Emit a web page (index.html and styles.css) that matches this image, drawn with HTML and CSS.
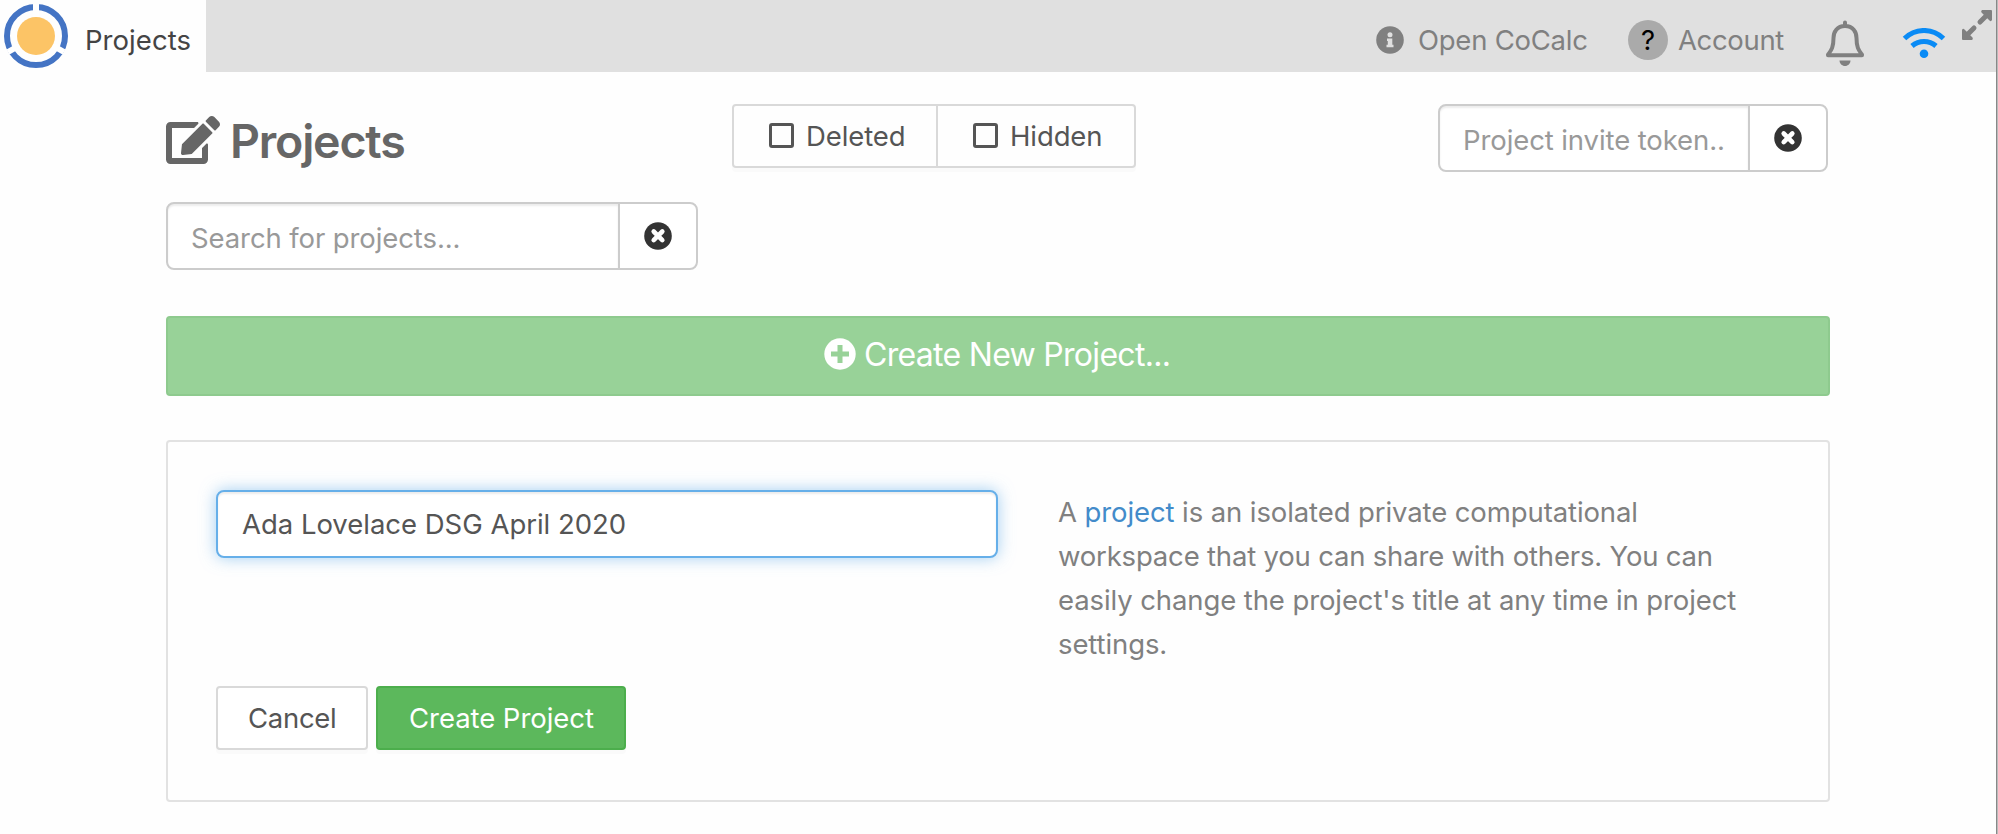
FILE: index.html
```html
<!DOCTYPE html>
<html lang="en">
<head>
<meta charset="utf-8">
<title>Projects</title>
<link rel="stylesheet" href="styles.css">
</head>
<body>
<svg width="0" height="0" class="defs">
  <symbol id="times-circle" viewBox="0 0 28 28">
    <circle cx="14" cy="14" r="13.8" fill="#333"/>
    <path d="M9.7 9.5l8.6 8.6M18.3 9.5l-8.6 8.6" stroke="#fff" stroke-width="4.6" stroke-linecap="round"/>
  </symbol>
</svg>
<div class="app">
  <header class="topbar">
    <div class="tab">
      <svg class="logo" viewBox="0 0 64 64" width="64" height="64">
        <circle cx="32" cy="32" r="29" fill="none" stroke="#4474c4" stroke-width="6"/>
        <path d="M32 36V0M32 32L4 48M32 32L60 48" stroke="#fff" stroke-width="6" fill="none"/>
        <circle cx="32" cy="32" r="19" fill="#fcc466"/>
      </svg>
      <span class="tab-label t-tab">Projects</span>
    </div>
    <nav class="nav">
      <svg class="info" viewBox="0 0 28 28" width="28" height="28"><circle cx="14" cy="14" r="13.8" fill="#808080"/><circle cx="14" cy="8.800" r="2.500" fill="#e0e0e0"/><path d="M11 12.400h5.300v6.400h1.200v2.500h-7v-2.500h1.300v-3.900H11z" fill="#e0e0e0"/></svg>
      <span class="t-open">Open CoCalc</span>
      <span class="help">?</span>
      <span class="t-account">Account</span>
      <svg class="bell" viewBox="0 0 38 46" width="38" height="46"><path d="M19 2.500V6M19 6C11 6 7.500 12 7.500 18c0 10-2.500 12.500-5.500 16.700V35.300H36v-.6C33 30.500 30.500 28 30.500 18 30.500 12 27 6 19 6z" fill="none" stroke="#808080" stroke-width="4" stroke-linejoin="round" stroke-linecap="round"/><path d="M13.500 40.500h11c0 3-2.500 5.500-5.500 5.500s-5.500-2.500-5.500-5.500z" fill="#808080"/></svg>
      <svg class="wifi" viewBox="0 0 44 30" width="44" height="30"><path d="M2.500 10.500C13.500-.2 30.500-.2 41.500 10.500M10 18c7-6 17-6 24 0" fill="none" stroke="#0a8bf5" stroke-width="5"/><circle cx="22" cy="25.700" r="4.300" fill="#0a8bf5"/></svg>
      <svg class="expand" viewBox="0 0 30 30" width="30" height="30"><g fill="#808080"><path d="M20 0h9q1 0 1 1v9q-1 2-2.500.5L19.500 2.500Q18.500 1 20 0zM10 30H1q-1 0-1-1v-9q1-2 2.500-.5l8 8Q11.500 29 10 30z"/></g><path d="M25 5l-7 7M5 25l7-7" stroke="#808080" stroke-width="5" stroke-linecap="round"/></svg>
    </nav>
  </header>
  <main class="content">
    <div class="row">
      <div class="heading">
        <svg viewBox="0 0 576 512" width="54" height="48"><path fill="#666" d="M402.600 83.200l90.200 90.200c3.800 3.800 3.800 10 0 13.800L274.400 405.600l-92.800 10.300c-12.400 1.400-22.900-9.100-21.500-21.500l10.300-92.800L388.800 83.200c3.800-3.800 10-3.800 13.800 0zm162-22.900l-48.800-48.800c-15.200-15.200-39.900-15.200-55.200 0l-35.400 35.400c-3.800 3.800-3.800 10 0 13.800l90.200 90.200c3.800 3.800 10 3.800 13.800 0l35.400-35.400c15.200-15.300 15.200-40 0-55.200zM384 346.200V448H64V128h229.800c3.200 0 6.200-1.300 8.500-3.500l40-40c7.600-7.600 2.200-20.500-8.500-20.500H48C21.500 64 0 85.500 0 112v352c0 26.500 21.500 48 48 48h352c26.500 0 48-21.500 48-48V306.200c0-10.700-12.900-16-20.500-8.500l-40 40c-2.200 2.300-3.500 5.300-3.500 8.500z"/></svg>
        <h1 class="t-heading">Projects</h1>
      </div>
      <div class="filters">
        <div class="filter"><i class="box"></i><span class="t-deleted">Deleted</span></div>
        <div class="filter hidden"><i class="box"></i><span class="t-hidden">Hidden</span></div>
      </div>
      <div class="group token">
        <div class="field"><span class="t-token">Project invite token..</span></div>
        <div class="clear"><svg width="28" height="28"><use href="#times-circle"/></svg></div>
      </div>
    </div>
    <div class="group search">
      <div class="field"><span class="t-search">Search for projects...</span></div>
      <div class="clear"><svg width="28" height="28"><use href="#times-circle"/></svg></div>
    </div>
    <div class="create">
      <svg viewBox="0 0 32 32" width="32" height="32"><circle cx="16" cy="16" r="15.700" fill="#fff"/><path d="M16 7v18M7 16h18" stroke="#98d298" stroke-width="5"/></svg>
      <span class="t-create">Create New Project...</span>
    </div>
    <section class="panel">
      <div class="form">
        <div class="title-input"><span class="t-ada">Ada Lovelace DSG April 2020</span></div>
        <div class="buttons">
          <div class="btn cancel"><span class="t-cancel">Cancel</span></div>
          <div class="btn submit"><span class="t-submit">Create Project</span></div>
        </div>
      </div>
      <p class="desc"><span class="d1">A <a>project</a> is an isolated private computational</span><br><span class="d2">workspace that you can share with others. You can</span><br><span class="d3">easily change the project's title at any time in project</span><br><span class="d4">settings.</span></p>
    </section>
  </main>
  <div class="edge"></div>
</div>
</body>
</html>
```
FILE: styles.css
```css
* { box-sizing: border-box; }
body { margin: 0; background: #fefefe; font-family: Inter, "Liberation Sans", sans-serif; font-size: 27.5px; line-height: 40px; color: #555; letter-spacing: -0.1px; }
svg { display: block; flex: none; }
span, h1 { white-space: nowrap; }
.defs { position: absolute; }
.app { position: relative; width: 1998px; height: 834px; overflow: hidden; }
.topbar { display: flex; height: 72px; background: #e0e0e0; }
.tab { display: flex; width: 206px; background: #fefefe; color: #444; padding: 4px 0 0 4px; }
.tab-label { margin: 16px 0 0 17px; letter-spacing: 0.05px; }
.nav { display: flex; flex: 1; padding-left: 1170px; color: #808080; }
.nav > * { flex: none; }
.info { margin-top: 26px; }
.t-open { width: 170px; margin: 20px 0 0 14px; letter-spacing: -0.25px; }
.help { width: 40px; height: 40px; margin: 20px 0 0 40px; border-radius: 50%; background: #aaa; color: #000; text-align: center; }
.t-account { width: 107px; margin: 20px 0 0 10px; letter-spacing: -0.35px; }
.bell { margin: 20px 0 0 41px; }
.wifi { margin: 28px 0 0 38px; }
.expand { margin: 10px 0 0 16px; }
.content { padding: 32px 168px 0 166px; }
.row { display: flex; align-items: flex-start; height: 98px; }
.heading { display: flex; width: 566px; padding-top: 12px; }
h1 { margin: -3px 0 0 10px; font-size: 46.5px; line-height: 56px; font-weight: 600; color: #666; letter-spacing: -1.2px; }
.filters { display: flex; width: 404px; height: 64px; border: 2px solid #d9d9d9; border-radius: 4px; box-shadow: 0 4px 0 #fafafa; }
.filter { display: flex; width: 204px; padding: 10px 0 0 35px; border-right: 2px solid #d9d9d9; }
.filter.hidden { border: 0; width: 196px; }
.box { width: 25px; height: 25px; margin: 7px 12px 0 0; border: 3px solid #555; border-radius: 3px; }
.group { display: flex; height: 68px; border: 2px solid #ccc; border-radius: 8px; background: #fff; }
.field { flex: 1; padding: 14px 0 0 23px; color: #999; box-shadow: inset 0 2px 2px rgba(0,0,0,.08); border-radius: 6px 0 0 6px; }
.clear { width: 78px; padding: 18px 0 0 24px; border-left: 2px solid #ccc; }
.token { width: 390px; margin-left: 302px; }
.search { width: 532px; }
.create { display: flex; justify-content: flex-start; width: 1664px; height: 80px; margin-top: 46px; padding: 20px 0 0 656px; border: 2px solid #8eca8e; border-radius: 4px; background: #98d298; color: #fff; font-size: 32px; }
.t-create { margin: -3px 0 0 8px; letter-spacing: -0.7px; }
.panel { display: flex; width: 1664px; height: 362px; margin-top: 44px; padding: 48px; border: 2px solid #e2e2e2; border-radius: 4px; }
.form { width: 782px; }
.title-input { height: 68px; padding: 12px 0 0 24px; border: 2px solid #66afe9; border-radius: 8px; background: #fff; box-shadow: inset 0 2px 2px rgba(0,0,0,.075), 0 0 16px rgba(102,175,233,.6); }
.t-ada { letter-spacing: -0.02px; }
.buttons { display: flex; gap: 8px; margin-top: 128px; }
.btn { height: 64px; padding: 10px 0 0 30px; border: 2px solid #d9d9d9; border-radius: 4px; box-shadow: 0 4px 0 #fafafa; background: #fff; }
.cancel { width: 152px; letter-spacing: -0.3px; }
.submit { width: 250px; padding-left: 31px; background: #5cb85c; border-color: #4cae4c; color: #fff; letter-spacing: -0.05px; }
.desc { margin: 0 0 0 60px; line-height: 44px; color: #808080; }
.d2 { letter-spacing: -0.19px; }
.desc a { color: #428bca; }
.edge { position: absolute; right: 0; top: 0; width: 2px; height: 834px; background: linear-gradient(90deg, #888 50%, #bbb 50%); }
```
